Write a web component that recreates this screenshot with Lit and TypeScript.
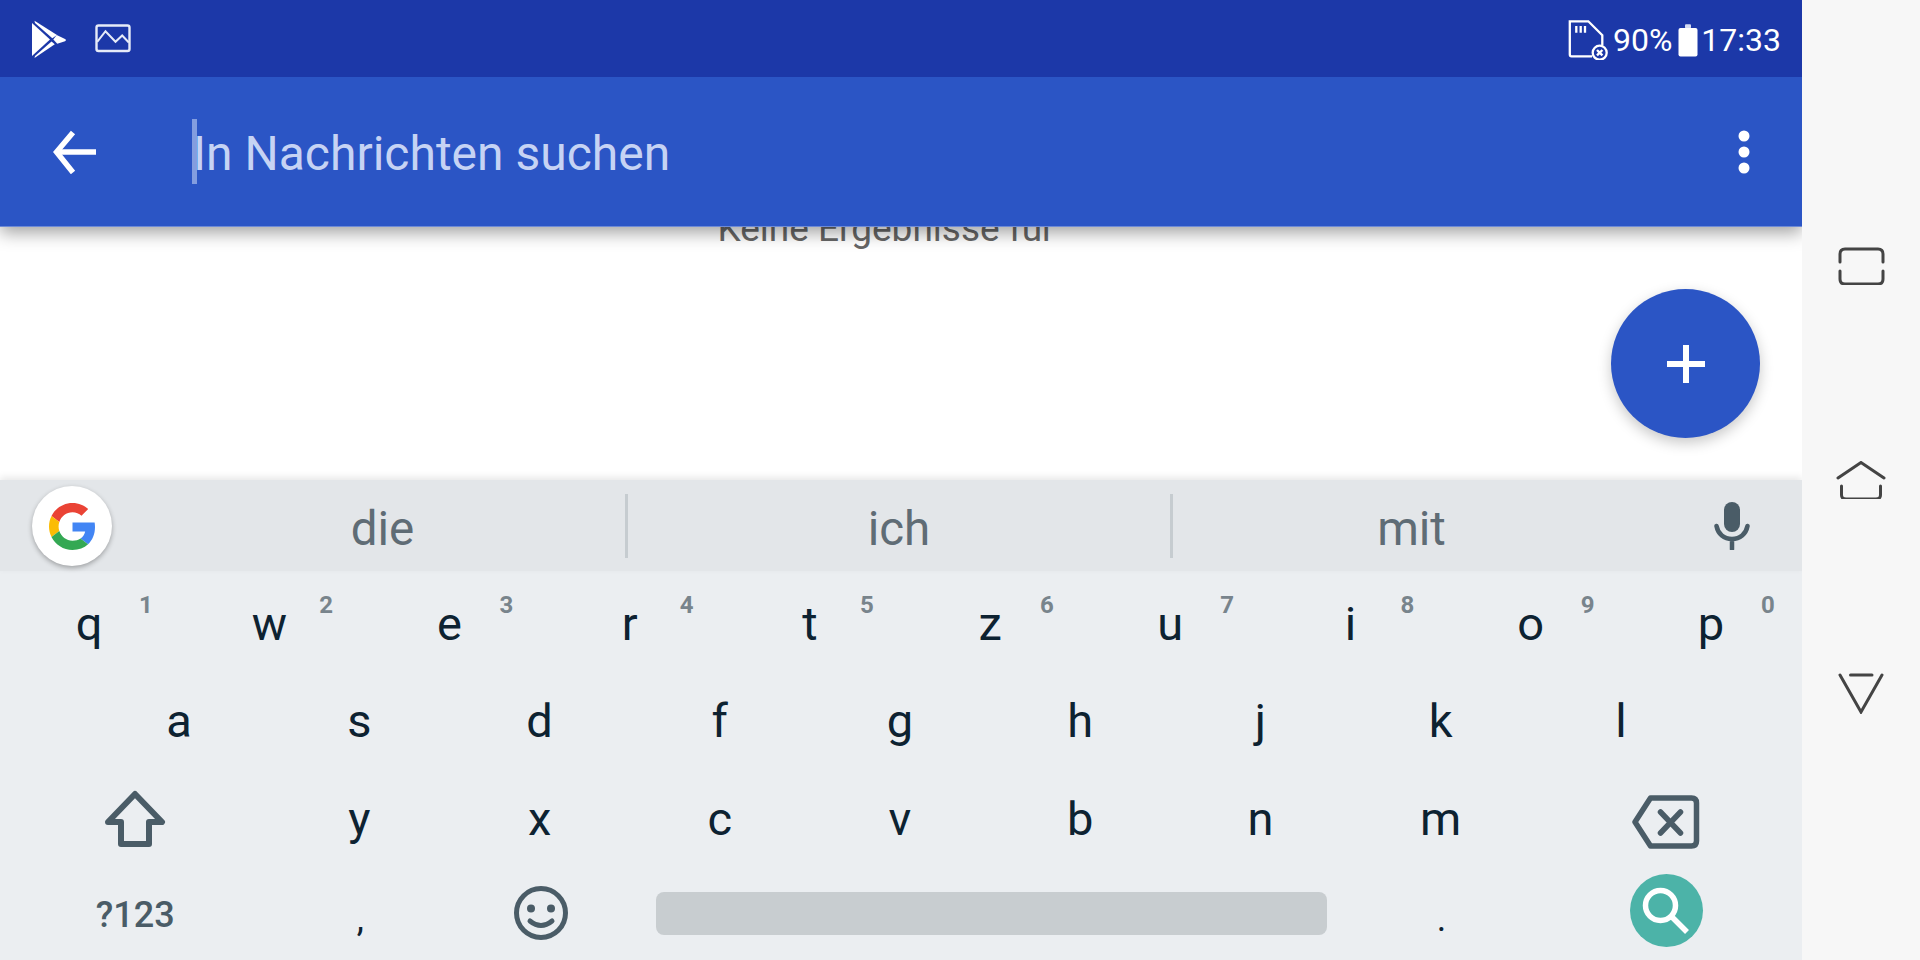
import { LitElement, html, css } from "lit";
import { customElement } from "lit/decorators.js";

const row1: [string, string][] = [["q","1"],["w","2"],["e","3"],["r","4"],["t","5"],["z","6"],["u","7"],["i","8"],["o","9"],["p","0"]];
const row2 = ["a","s","d","f","g","h","j","k","l"];
const row3 = ["y","x","c","v","b","n","m"];

@customElement("app-root")
export class AppRoot extends LitElement {
  static styles = css`
    :host { display: flex; width: 1920px; height: 960px; overflow: hidden; font-family: Roboto, "Noto Sans", sans-serif; background: #f7f7f7; }
    svg { display: block; flex: none; }
    .main { width: 1802px; height: 960px; display: flex; flex-direction: column; overflow: hidden; flex: none; }
    .rail { flex: 1; display: flex; flex-direction: column; align-items: center; padding-top: 247px; background: #f7f7f7; }
    .rail .home { margin-top: 176px; }
    .rail .back { margin-top: 173px; }
    .status { height: 77px; flex: none; background: #1c38a8; display: flex; align-items: center; padding: 0 21px 0 31px; color: #fff; font-size: 32px; position: relative; z-index: 3; }
    .status .img { margin-left: 28px; }
    .status .right { margin-left: auto; display: flex; align-items: center; padding-top: 3px; }
    .status .pct { margin: 0 6px 0 5px; }
    .status .bat { margin-right: 3px; }
    .toolbar { height: 150px; flex: none; box-sizing: border-box; background: #2b55c5; border-bottom: 1px solid #6d8ad6; display: flex; align-items: center; padding: 0 52px 0 53px; position: relative; z-index: 2; box-shadow: 0 6px 16px rgba(0,0,0,.36); }
    .field { position: relative; margin-left: 96px; padding: 5px 0 0 1px; font-size: 48px; line-height: 66px; color: #c6d3f4; flex: 1; white-space: nowrap; }
    .cursor { position: absolute; left: 0; top: 3px; width: 5px; height: 65px; background: rgba(190,205,240,.6); }
    .content { flex: 1; background: #fff; position: relative; z-index: 1; }
    .empty { margin: -18px 30px 0 0; text-align: center; font-size: 37px; line-height: 40px; color: #666; }
    .fab { position: absolute; left: 1611px; top: 62px; width: 149px; height: 149px; border-radius: 50%; background: #2b55c5; box-shadow: 0 5px 14px rgba(0,0,0,.22); display: flex; align-items: center; justify-content: center; }
    .strip { height: 91px; flex: none; background: #e3e6e9; display: grid; grid-template-columns: 140px 485px 545px 480px 1fr; align-items: center; position: relative; z-index: 2; box-shadow: 0 -3px 7px rgba(0,0,0,.09); color: #5f6c75; font-size: 47.5px; }
    .g { position: relative; height: 91px; }
    .gcircle { position: absolute; left: 32px; top: 6px; width: 80px; height: 80px; border-radius: 50%; background: #fff; box-shadow: 0 2px 5px rgba(0,0,0,.3); display: flex; align-items: center; justify-content: center; }
    .sugg { height: 64px; box-sizing: border-box; display: flex; align-items: center; justify-content: center; padding-top: 7px; }
    .sugg.div { border-left: 3px solid #c6ccd0; }
    .mic { display: flex; justify-content: center; padding-left: 12px; }
    .kbd { height: 389px; flex: none; background: #ebeef1; display: grid; grid-template-rows: repeat(4, 1fr); color: #0d2231; font-size: 47px; }
    .row { display: grid; }
    .r1 { grid-template-columns: repeat(10, 1fr); }
    .r2 { grid-template-columns: repeat(9, 1fr); padding: 0 90px; }
    .r3 { grid-template-columns: 1.5fr repeat(7, 1fr) 1.5fr; }
    .r4 { grid-template-columns: 1.5fr 1fr 1fr 4fr 1fr 1.5fr; }
    .key { position: relative; display: flex; align-items: center; justify-content: center; }
    .ch { padding: 9px 2px 0 0; }
    .r1 .ch, .r2 .ch { padding-top: 7px; }
    .digit { position: absolute; left: calc(50% + 49px); top: 21px; font-size: 24px; line-height: 26px; font-weight: 700; color: #78848c; }
    .sym { color: #4a5c67; font-size: 36px; font-weight: 500; padding-top: 8px; }
    .pun { font-size: 36px; padding-top: 16px; }
    .space { width: 671px; height: 43px; margin-top: 5px; border-radius: 8px; background: #c8cdd0; }
    .shift { margin-top: 10px; }
    .del { margin-top: 16px; }
    .emoji { margin-top: 4px; }
  `;

  private playIcon() {
    return html`<svg width="36" height="38" viewBox="31 20 36 38" fill="#fff">
      <path d="M32 23L50 39.5L32 56Z"/>
      <path d="M34.5 20.7L57 35L52.3 38.2L35 23Z"/>
      <path d="M34.5 58L35 56L51.5 41.5L54.8 44.3Z"/>
      <path d="M56.7 35L65 39C66.2 39.6 66.2 40.6 65 41.2L57.3 43.8L53.3 39.6Z"/>
    </svg>`;
  }
  private imageIcon() {
    return html`<svg width="36" height="29" viewBox="94.5 24.5 36 29" fill="none" stroke="#e6ebf8" stroke-width="2.4">
      <rect x="96" y="26" width="33" height="25.5" rx="2"/>
      <path d="M96.7 42.3L105 31.7L115 42.3L121.7 36L128.3 43" stroke-width="2"/>
    </svg>`;
  }
  private sdIcon() {
    return html`<svg width="40" height="40" viewBox="1569 18 40 40" fill="none" stroke="#fff" stroke-width="2.3">
      <path d="M1593 54.3H1572.5Q1570.8 54.3 1570.8 52.5V19.3H1589.3L1603.3 33.3V43"/>
      <path d="M1577.3 24V30.7M1581.7 24V30.7M1586 24V30.7"/>
      <circle cx="1600.7" cy="50.7" r="7"/>
      <path d="M1598 48L1603.4 53.4M1603.4 48L1598 53.4" stroke-width="2.4"/>
    </svg>`;
  }
  private batteryIcon() {
    return html`<svg width="20" height="33" viewBox="1679.5 21.5 20 33" fill="#fff">
      <rect x="1686.5" y="21.7" width="6" height="4" rx="1" fill="#d5dcf2"/>
      <rect x="1680" y="25.5" width="19" height="28.5" rx="2"/>
    </svg>`;
  }

  render() {
    return html`
      <div class="main">
        <div class="status">
          ${this.playIcon()}
          <div class="img">${this.imageIcon()}</div>
          <div class="right">
            ${this.sdIcon()}
            <span class="pct">90%</span>
            <div class="bat">${this.batteryIcon()}</div>
            <span>17:33</span>
          </div>
        </div>
        <div class="toolbar">
          <svg width="43" height="44" viewBox="53 130 43 44" fill="none" stroke="#fff" stroke-width="5.5">
            <path d="M96 152H57"/>
            <path d="M73 132.5L56.5 152L73 172.5"/>
          </svg>
          <div class="field"><div class="cursor"></div>In Nachrichten suchen</div>
          <svg width="12" height="44" viewBox="0 0 12 44" fill="#fff">
            <circle cx="6" cy="6" r="5.5"/><circle cx="6" cy="22" r="5.5"/><circle cx="6" cy="38" r="5.5"/>
          </svg>
        </div>
        <div class="content">
          <div class="empty">Keine Ergebnisse für</div>
          <div class="fab">
            <svg width="38" height="38" viewBox="0 0 38 38" fill="none" stroke="#fff" stroke-width="6"><path d="M19 0V38M0 19H38"/></svg>
          </div>
        </div>
        <div class="strip">
          <div class="g"><div class="gcircle">
            <svg width="47" height="47" viewBox="0 0 48 48">
              <path fill="#EA4335" d="M24 9.5c3.54 0 6.71 1.22 9.21 3.6l6.85-6.85C35.9 2.38 30.47 0 24 0 14.62 0 6.51 5.38 2.56 13.22l7.98 6.19C12.43 13.72 17.74 9.5 24 9.5z"/>
              <path fill="#4285F4" d="M46.98 24.55c0-1.57-.15-3.09-.38-4.55H24v9.02h12.94c-.58 2.96-2.26 5.48-4.78 7.18l7.73 6c4.51-4.18 7.09-10.36 7.09-17.65z"/>
              <path fill="#FBBC05" d="M10.53 28.59c-.48-1.45-.76-2.99-.76-4.59s.27-3.14.76-4.59l-7.98-6.19C.92 16.46 0 20.12 0 24c0 3.88.92 7.54 2.56 10.78l7.97-6.19z"/>
              <path fill="#34A853" d="M24 48c6.48 0 11.93-2.13 15.89-5.81l-7.73-6c-2.15 1.45-4.92 2.3-8.16 2.3-6.26 0-11.57-4.22-13.47-9.91l-7.98 6.19C6.51 42.62 14.62 48 24 48z"/>
            </svg>
          </div></div>
          <div class="sugg">die</div>
          <div class="sugg div">ich</div>
          <div class="sugg div">mit</div>
          <div class="mic">
            <svg width="36" height="48" viewBox="1714 502 36 48" fill="none">
              <rect x="1724" y="502" width="16" height="30" rx="8" fill="#4a5c67"/>
              <path d="M1716.5 526C1718 534 1724 539 1732 539C1740 539 1746 534 1747.5 526M1732 539V549" stroke="#4a5c67" stroke-width="4.5" stroke-linecap="round"/>
            </svg>
          </div>
        </div>
        <div class="kbd">
          <div class="row r1">${row1.map(([c, d]) => html`<div class="key"><span class="ch">${c}</span><span class="digit">${d}</span></div>`)}</div>
          <div class="row r2">${row2.map((c) => html`<div class="key"><span class="ch">${c}</span></div>`)}</div>
          <div class="row r3">
            <div class="key">
              <svg class="shift" width="62" height="60" viewBox="104 789 62 60" fill="none" stroke="#4a5c67" stroke-width="6" stroke-linejoin="round">
                <path d="M135 794L162 822H149V844H121V822H108Z"/>
              </svg>
            </div>
            ${row3.map((c) => html`<div class="key"><span class="ch">${c}</span></div>`)}
            <div class="key">
              <svg class="del" width="70" height="56" viewBox="1631.5 794 70 56" fill="none" stroke="#4a5c67" stroke-width="5.5" stroke-linejoin="round" stroke-linecap="round">
                <path d="M1650 798H1691Q1696 798 1696 803V841Q1696 846 1691 846H1650L1634.5 822Z"/>
                <path d="M1660 812L1680 833M1680 812L1660 833"/>
              </svg>
            </div>
          </div>
          <div class="row r4">
            <div class="key"><span class="sym">?123</span></div>
            <div class="key"><span class="pun">,</span></div>
            <div class="key">
              <svg class="emoji" width="56" height="56" viewBox="512 885 56 56" fill="none" stroke="#4a5c67" stroke-width="5">
                <circle cx="540" cy="913" r="24.5"/>
                <circle cx="530" cy="908.5" r="4" fill="#4a5c67" stroke="none"/>
                <circle cx="550" cy="908.5" r="4" fill="#4a5c67" stroke="none"/>
                <path d="M529 921Q540 930 551 921" stroke-linecap="round"/>
              </svg>
            </div>
            <div class="key"><div class="space"></div></div>
            <div class="key"><span class="pun">.</span></div>
            <div class="key">
              <svg width="74" height="74" viewBox="1630 874 74 74">
                <circle cx="1666.5" cy="910.5" r="36.5" fill="#4cb3a8"/>
                <circle cx="1660.5" cy="905.5" r="15" fill="none" stroke="#fff" stroke-width="5.5"/>
                <path d="M1671 916L1687 932" stroke="#fff" stroke-width="5.5" fill="none"/>
              </svg>
            </div>
          </div>
        </div>
      </div>
      <div class="rail">
        <svg width="48" height="38" viewBox="1837 247 48 38" fill="none" stroke="#444" stroke-width="3" stroke-linecap="round">
          <path d="M1840 262V254Q1840 249 1845 249H1878Q1883 249 1883 254V262M1840 271V279Q1840 284 1845 284H1878Q1883 284 1883 279V271"/>
        </svg>
        <svg class="home" width="52" height="38" viewBox="1835 460 52 38" fill="none" stroke="#444" stroke-width="3" stroke-linecap="round">
          <path d="M1838 477L1861 461.5L1884 477M1841.5 485V494Q1841.5 498 1846 498H1876Q1880.5 498 1880.5 494V485"/>
        </svg>
        <svg class="back" width="46" height="42" viewBox="1838 672 46 42" fill="none" stroke="#444" stroke-width="3" stroke-linecap="round">
          <path d="M1840 675L1861 712L1882 675M1850.5 675H1872"/>
        </svg>
      </div>
    `;
  }
}
